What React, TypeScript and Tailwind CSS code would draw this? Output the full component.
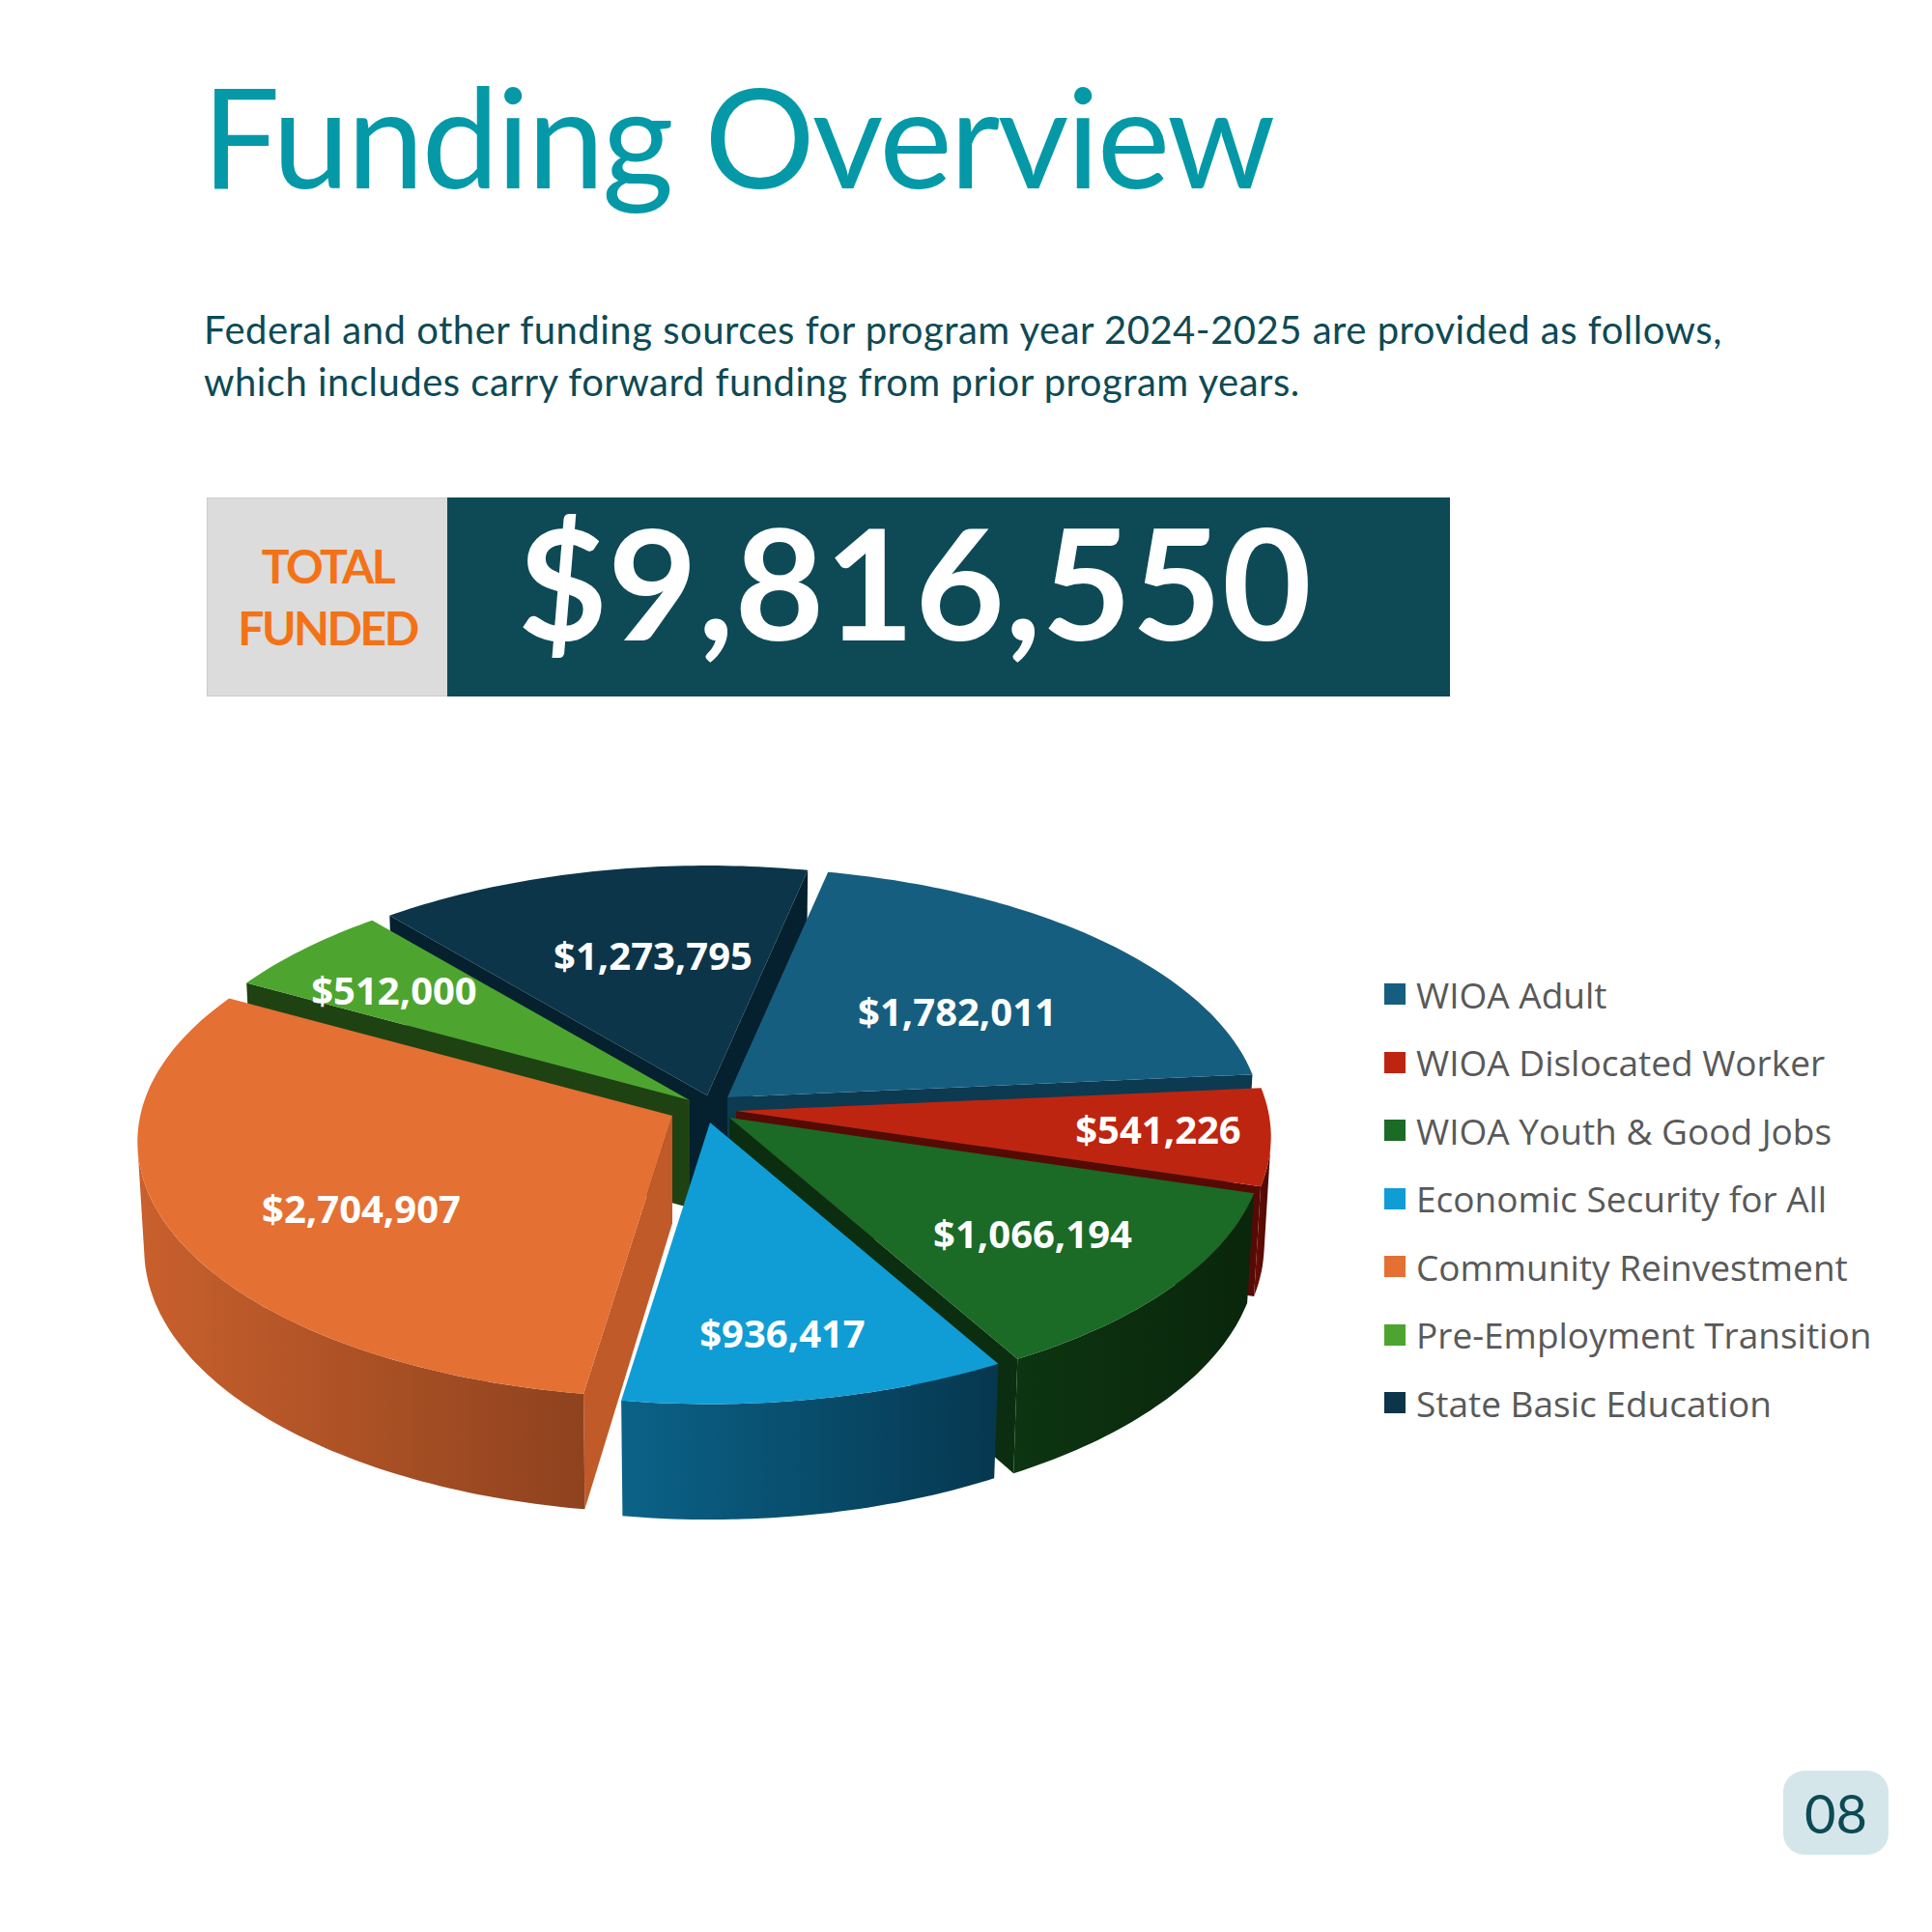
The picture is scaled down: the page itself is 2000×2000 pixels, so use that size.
import React from "react";

const DEG = Math.PI / 180;
const PHI = 28.4 * DEG;
const SN = Math.sin(PHI);
const CS = Math.cos(PHI);
const RR = 0.115;
const FF = 4790;
const HH = 0.02675;

function proj(t: number, bottom: boolean, rad: number = RR): [number, number] {
  const x = rad * Math.sin(t * DEG);
  const z = -rad * Math.cos(t * DEG);
  const y = bottom ? -HH : 0;
  const yc = y * CS - z * SN;
  const d = 1 - y * SN - z * CS;
  return [(FF * x) / d, (-FF * yc) / d];
}

const CX = 736;
const CY = 1148;

type Slice = {
  name: string;
  value: number;
  label: string;
  off: [number, number];
  top: string;
  face: string;
  wall: [string, string];
  lx: number;
  ly: number;
};

const SLICES: Slice[] = [
  { name: "WIOA Adult", value: 1782011, label: "$1,782,011", off: [17, -10], top: "#165e7f", face: "#0c3a50", wall: ["#0f4662", "#0b3347"], lx: 991, ly: 1055 },
  { name: "WIOA Dislocated Worker", value: 541226, label: "$541,226", off: [26, 4], top: "#be2510", face: "#560a04", wall: ["#6a0e06", "#4a0803"], lx: 1199, ly: 1177 },
  { name: "WIOA Youth & Good Jobs", value: 1066194, label: "$1,066,194", off: [19, 11], top: "#1b6a25", face: "#0c2e10", wall: ["#0d3511", "#0a260c"], lx: 1069, ly: 1285 },
  { name: "Economic Security for All", value: 936417, label: "$936,417", off: [-1, 16], top: "#109dd5", face: "#0a5f86", wall: ["#0b6288", "#06374f"], lx: 810, ly: 1388 },
  { name: "Community Reinvestment", value: 2704907, label: "$2,704,907", off: [-40, 9], top: "#e47033", face: "#c05a29", wall: ["#c9602d", "#8e421e"], lx: 374, ly: 1259 },
  { name: "Pre-Employment Transition", value: 512000, label: "$512,000", off: [-22, -7], top: "#4da52f", face: "#1f4213", wall: ["#2a5a19", "#1f4213"], lx: 408, ly: 1033 },
  { name: "State Basic Education", value: 1273795, label: "$1,273,795", off: [-4, -12], top: "#0c3549", face: "#05202e", wall: ["#0a2c3d", "#061f2c"], lx: 676, ly: 997 },
];

const TOTAL = SLICES.reduce((a, s) => a + s.value, 0);
const START = 12;

function pt(ox: number, oy: number, p: [number, number]) {
  return `${(ox + p[0]).toFixed(1)},${(oy + p[1]).toFixed(1)}`;
}

function rim(a0: number, a1: number, bottom: boolean): [number, number][] {
  const out: [number, number][] = [];
  const n = Math.max(2, Math.ceil(Math.abs(a1 - a0)));
  for (let i = 0; i <= n; i++) {
    const t = a0 + ((a1 - a0) * i) / n;
    out.push(proj(t, bottom));
  }
  return out;
}

function Pie() {
  let acc = START;
  const geo = SLICES.map((s, i) => {
    const a0 = acc;
    const a1 = acc + (s.value / TOTAL) * 360;
    acc = a1;
    return { s, i, a0, a1, mid: (a0 + a1) / 2 };
  });
  const ordered = [...geo].sort((a, b) => Math.cos(b.mid * DEG) - Math.cos(a.mid * DEG));
  const bc = proj(0, true, 0);

  return (
    <svg width={1420} height={720} viewBox="0 880 1420 720" className="block shrink-0">
      <defs>
        {geo.map(({ s, i }) => (
          <linearGradient key={i} id={`w${i}`} x1="0" y1="0" x2="1" y2="0">
            <stop offset="0" stopColor={s.wall[0]} />
            <stop offset="1" stopColor={s.wall[1]} />
          </linearGradient>
        ))}
      </defs>
      {ordered.map(({ s, i, a0, a1 }) => {
        const ox = CX + s.off[0];
        const oy = CY + s.off[1];
        const parts: React.ReactNode[] = [];
        const radial = (t: number, key: string) => {
          const pts = [pt(ox, oy, [0, 0]), pt(ox, oy, proj(t, false)), pt(ox, oy, proj(t, true)), pt(ox, oy, bc)].join(" ");
          parts.push(<polygon key={key} points={pts} fill={s.face} />);
        };
        if (Math.sin(a0 * DEG) < 0) radial(a0, "f0");
        if (Math.sin(a1 * DEG) > 0) radial(a1, "f1");
        const w0 = Math.max(a0, 97.5);
        const w1 = Math.min(a1, 262.5);
        if (w0 < w1) {
          const topR = rim(w0, w1, false);
          const botR = rim(w0, w1, true).reverse();
          const pts = [...topR, ...botR].map((p) => pt(ox, oy, p)).join(" ");
          parts.push(<polygon key="wall" points={pts} fill={`url(#w${i})`} />);
        }
        const topPts = [pt(ox, oy, [0, 0]), ...rim(a0, a1, false).map((p) => pt(ox, oy, p))].join(" ");
        parts.push(<polygon key="top" points={topPts} fill={s.top} />);
        return <g key={i}>{parts}</g>;
      })}
      {SLICES.map((s, i) => (
        <text
          key={i}
          x={s.lx}
          y={s.ly + 9}
          textAnchor="middle"
          fill="#ffffff"
          fontSize={40}
          fontWeight={700}
          fontFamily="'Open Sans', sans-serif"
        >
          {s.label}
        </text>
      ))}
    </svg>
  );
}

export default function App() {
  return (
    <div className="w-[2000px] h-[2000px] bg-white flex flex-col overflow-hidden">
      <div className="pl-[214px] pt-[68px] flex flex-col items-start">
        <h1
          className="-ml-[5px] text-[143px] leading-[143px] font-normal text-[#0599a8] tracking-[-2.5px]"
          style={{ fontFamily: "Lato, sans-serif" }}
        >
          Funding Overview
        </h1>
        <p
          className="-ml-[3px] mt-[103px] text-[40px] leading-[54px] text-[#0d4a55] tracking-[0.5px]"
          style={{ fontFamily: "Lato, sans-serif" }}
        >
          Federal and other funding sources for program year 2024-2025 are provided as follows,
          <br />
          which includes carry forward funding from prior program years.
        </p>
        <div className="mt-[93px] flex h-[206px]">
          <div className="w-[249px] h-full bg-[#dcdcdc] border border-r-0 border-[#c9cccc] flex flex-col items-center justify-center">
            <span
              className="text-[48px] leading-[64px] font-bold text-[#f47216] text-center tracking-[-2.5px]"
              style={{ fontFamily: "Lato, sans-serif" }}
            >
              TOTAL
              <br />
              FUNDED
            </span>
          </div>
          <div className="w-[1038px] h-full bg-[#0e4a56] pl-[73px] pt-[6px]">
            <span
              className="block text-[160px] leading-[160px] font-bold text-white tracking-[0.5px]"
              style={{ fontFamily: "Lato, sans-serif" }}
            >
              $9,816,550
            </span>
          </div>
        </div>
      </div>

      <div className="mt-[157px] flex items-start">
        <Pie />
        <div className="ml-[13px] mt-[116px] flex flex-col">
          {SLICES.map((s, i) => (
            <div key={i} className="h-[70.5px] flex items-center gap-[11px]">
              <span className="w-[22px] h-[22px] shrink-0" style={{ backgroundColor: s.top }} />
              <span
                className="text-[37px] leading-none text-[#595959] whitespace-nowrap"
                style={{ fontFamily: "'Open Sans', sans-serif" }}
              >
                {s.name}
              </span>
            </div>
          ))}
        </div>
      </div>

      <div className="mt-auto flex justify-end pr-[45px] pb-[80px]">
        <div
          className="w-[109px] h-[87px] rounded-[22px] bg-[#d5e6ea] flex items-center justify-center text-[56px] leading-none text-[#0d4a55]"
          style={{ fontFamily: "Lato, sans-serif" }}
        >
          08
        </div>
      </div>
    </div>
  );
}
